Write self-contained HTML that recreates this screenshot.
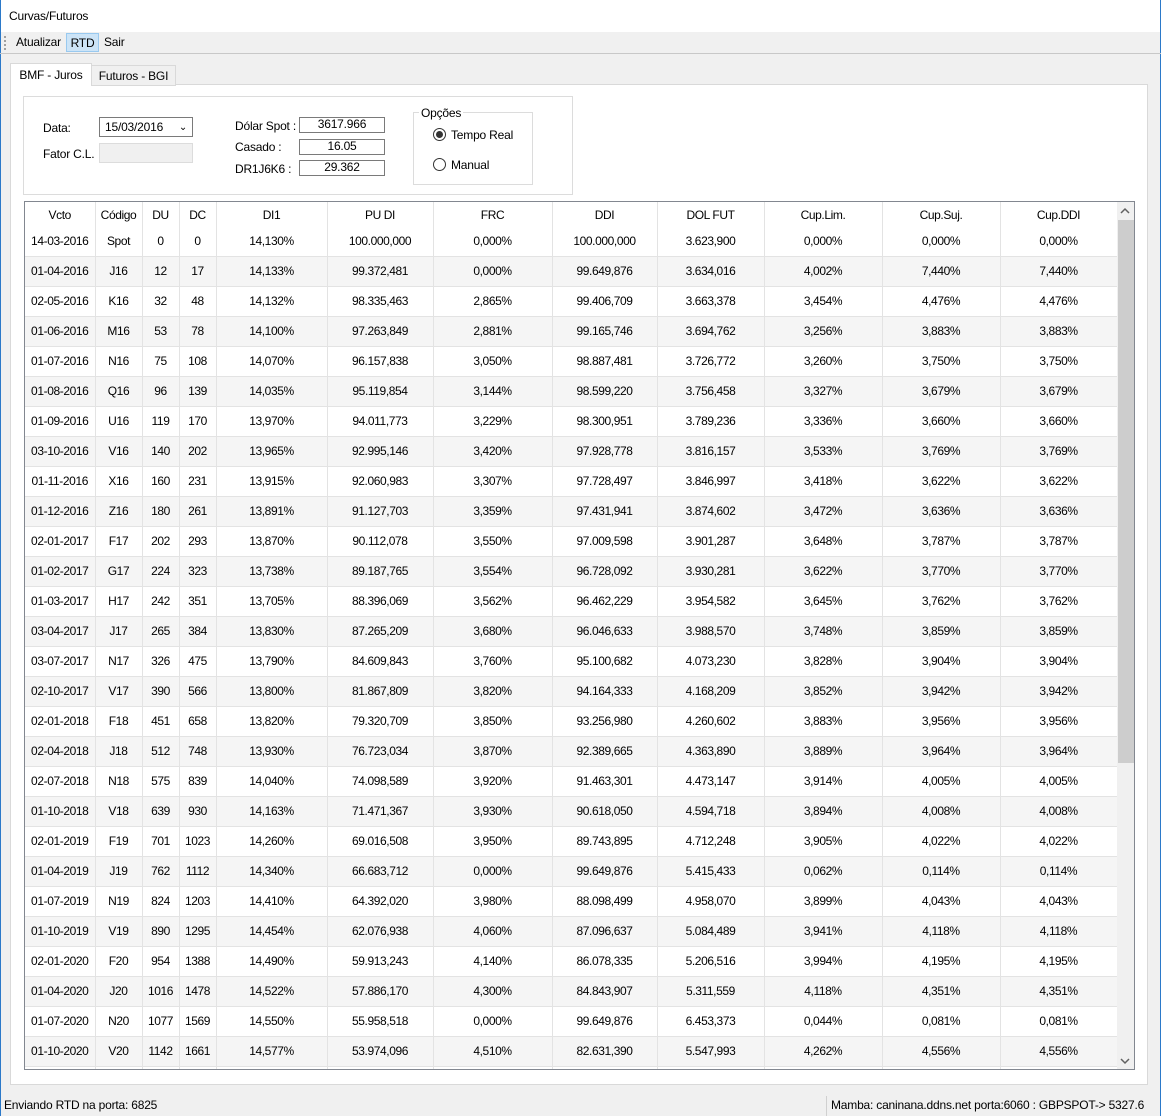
<!DOCTYPE html>
<html><head><meta charset="utf-8">
<style>
*{margin:0;padding:0;box-sizing:border-box}
body{width:1161px;height:1116px;background:#f0f0f0;font-family:"Liberation Sans",sans-serif;font-size:12px;color:#000;position:relative;overflow:hidden;letter-spacing:-0.2px}
.a{position:absolute}
#title{left:0;top:0;width:1161px;height:32px;background:#fff}
#tb{left:0;top:32px;width:1161px;height:22px;border-bottom:1px solid #c8c8c8}
.btn{top:33px;height:19px;line-height:19px;padding:0 4px}
#panel{left:10px;top:84px;width:1138px;height:1001px;background:#fff;border:1px solid #d9d9d9}
.tab{height:21px;line-height:20px;text-align:center;border:1px solid #d9d9d9;border-bottom:none}
.box{background:#fff;border:1px solid #7a7a7a;height:15px;text-align:center;line-height:13px}
#grid{left:24px;top:201px;width:1111px;height:869px;border:1px solid #828790;background:#fff;overflow:hidden}
table{border-collapse:collapse;table-layout:fixed;width:1092px;font-size:12px}
td,th{text-align:center;border-right:1px solid #e3e3e3;border-bottom:1px solid #e3e3e3;height:30px;font-weight:normal;white-space:nowrap;overflow:hidden;letter-spacing:-0.4px}
th{height:24px;border-bottom:none;padding-top:1px}
tr:nth-child(odd) td{background:#f5f5f5}
tr.h0 td{background:#fff}
#sb{left:1117px;top:202px;width:17px;height:867px;background:#f0f0f0}
</style></head><body>
<div class="a" id="title"></div>
<div class="a" style="left:0;top:0;width:1px;height:1116px;background:#2b79c9"></div>
<div class="a" style="left:1160px;top:0;width:1px;height:1116px;background:#2b79c9"></div>
<div class="a" style="left:9px;top:9px;font-size:12px">Curvas/Futuros</div>
<div class="a" id="tb"></div>
<div class="a" style="left:4px;top:36px;width:2px;height:14px;border-left:2px dotted #a0a0a0"></div>
<div class="a btn" style="left:12px">Atualizar</div>
<div class="a btn" style="left:66px;width:33px;background:#cce4f7;border:1px solid #99c9ef;text-align:center;padding:0">RTD</div>
<div class="a btn" style="left:100px">Sair</div>

<div class="a" id="panel"></div>
<div class="a tab" style="left:10px;top:63px;width:82px;height:22px;background:#fff;line-height:22px">BMF - Juros</div>
<div class="a tab" style="left:91px;top:65px;width:85px;background:#f0f0f0;border-bottom:1px solid #d9d9d9">Futuros - BGI</div>

<div class="a" style="left:23px;top:96px;width:550px;height:99px;border:1px solid #dcdcdc"></div>
<div class="a" style="left:43px;top:121px">Data:</div>
<div class="a box" style="left:99px;top:117px;width:94px;height:20px;text-align:left;padding-left:5px;line-height:19px">15/03/2016<span style="position:absolute;right:5px;top:0;font-size:10px">&#8964;</span></div>
<div class="a" style="left:43px;top:147px">Fator C.L.</div>
<div class="a" style="left:99px;top:143px;width:94px;height:20px;background:#f0f0f0;border:1px solid #dcdcdc"></div>
<div class="a" style="left:235px;top:119px">Dólar Spot :</div>
<div class="a" style="left:235px;top:140px">Casado :</div>
<div class="a" style="left:235px;top:162px">DR1J6K6 :</div>
<div class="a box" style="left:299px;top:117px;width:86px;height:16px">3617.966</div>
<div class="a box" style="left:299px;top:139px;width:86px;height:16px">16.05</div>
<div class="a box" style="left:299px;top:160px;width:86px;height:16px">29.362</div>
<div class="a" style="left:413px;top:112px;width:120px;height:73px;border:1px solid #dcdcdc"></div>
<div class="a" style="left:419px;top:106px;background:#fff;padding:0 2px">Opções</div>
<div class="a" style="left:433px;top:128px;width:13px;height:13px;border:1px solid #333;border-radius:50%;background:#fff"><div style="margin:2px;width:7px;height:7px;border-radius:50%;background:#333"></div></div>
<div class="a" style="left:451px;top:128px">Tempo Real</div>
<div class="a" style="left:433px;top:158px;width:13px;height:13px;border:1px solid #333;border-radius:50%;background:#fff"></div>
<div class="a" style="left:451px;top:158px">Manual</div>

<div class="a" id="grid">
<table>
<colgroup><col style="width:70px"><col style="width:47px"><col style="width:37px"><col style="width:37px"><col style="width:111px"><col style="width:106px"><col style="width:119px"><col style="width:105px"><col style="width:107px"><col style="width:118px"><col style="width:118px"><col style="width:117px"></colgroup>
<tr><th>Vcto</th><th>Código</th><th>DU</th><th>DC</th><th>DI1</th><th>PU DI</th><th>FRC</th><th>DDI</th><th>DOL FUT</th><th>Cup.Lim.</th><th>Cup.Suj.</th><th>Cup.DDI</th></tr>
<tr class="h0"><td>14-03-2016</td><td>Spot</td><td>0</td><td>0</td><td>14,130%</td><td>100.000,000</td><td>0,000%</td><td>100.000,000</td><td>3.623,900</td><td>0,000%</td><td>0,000%</td><td>0,000%</td></tr>
<tr><td>01-04-2016</td><td>J16</td><td>12</td><td>17</td><td>14,133%</td><td>99.372,481</td><td>0,000%</td><td>99.649,876</td><td>3.634,016</td><td>4,002%</td><td>7,440%</td><td>7,440%</td></tr>
<tr><td>02-05-2016</td><td>K16</td><td>32</td><td>48</td><td>14,132%</td><td>98.335,463</td><td>2,865%</td><td>99.406,709</td><td>3.663,378</td><td>3,454%</td><td>4,476%</td><td>4,476%</td></tr>
<tr><td>01-06-2016</td><td>M16</td><td>53</td><td>78</td><td>14,100%</td><td>97.263,849</td><td>2,881%</td><td>99.165,746</td><td>3.694,762</td><td>3,256%</td><td>3,883%</td><td>3,883%</td></tr>
<tr><td>01-07-2016</td><td>N16</td><td>75</td><td>108</td><td>14,070%</td><td>96.157,838</td><td>3,050%</td><td>98.887,481</td><td>3.726,772</td><td>3,260%</td><td>3,750%</td><td>3,750%</td></tr>
<tr><td>01-08-2016</td><td>Q16</td><td>96</td><td>139</td><td>14,035%</td><td>95.119,854</td><td>3,144%</td><td>98.599,220</td><td>3.756,458</td><td>3,327%</td><td>3,679%</td><td>3,679%</td></tr>
<tr><td>01-09-2016</td><td>U16</td><td>119</td><td>170</td><td>13,970%</td><td>94.011,773</td><td>3,229%</td><td>98.300,951</td><td>3.789,236</td><td>3,336%</td><td>3,660%</td><td>3,660%</td></tr>
<tr><td>03-10-2016</td><td>V16</td><td>140</td><td>202</td><td>13,965%</td><td>92.995,146</td><td>3,420%</td><td>97.928,778</td><td>3.816,157</td><td>3,533%</td><td>3,769%</td><td>3,769%</td></tr>
<tr><td>01-11-2016</td><td>X16</td><td>160</td><td>231</td><td>13,915%</td><td>92.060,983</td><td>3,307%</td><td>97.728,497</td><td>3.846,997</td><td>3,418%</td><td>3,622%</td><td>3,622%</td></tr>
<tr><td>01-12-2016</td><td>Z16</td><td>180</td><td>261</td><td>13,891%</td><td>91.127,703</td><td>3,359%</td><td>97.431,941</td><td>3.874,602</td><td>3,472%</td><td>3,636%</td><td>3,636%</td></tr>
<tr><td>02-01-2017</td><td>F17</td><td>202</td><td>293</td><td>13,870%</td><td>90.112,078</td><td>3,550%</td><td>97.009,598</td><td>3.901,287</td><td>3,648%</td><td>3,787%</td><td>3,787%</td></tr>
<tr><td>01-02-2017</td><td>G17</td><td>224</td><td>323</td><td>13,738%</td><td>89.187,765</td><td>3,554%</td><td>96.728,092</td><td>3.930,281</td><td>3,622%</td><td>3,770%</td><td>3,770%</td></tr>
<tr><td>01-03-2017</td><td>H17</td><td>242</td><td>351</td><td>13,705%</td><td>88.396,069</td><td>3,562%</td><td>96.462,229</td><td>3.954,582</td><td>3,645%</td><td>3,762%</td><td>3,762%</td></tr>
<tr><td>03-04-2017</td><td>J17</td><td>265</td><td>384</td><td>13,830%</td><td>87.265,209</td><td>3,680%</td><td>96.046,633</td><td>3.988,570</td><td>3,748%</td><td>3,859%</td><td>3,859%</td></tr>
<tr><td>03-07-2017</td><td>N17</td><td>326</td><td>475</td><td>13,790%</td><td>84.609,843</td><td>3,760%</td><td>95.100,682</td><td>4.073,230</td><td>3,828%</td><td>3,904%</td><td>3,904%</td></tr>
<tr><td>02-10-2017</td><td>V17</td><td>390</td><td>566</td><td>13,800%</td><td>81.867,809</td><td>3,820%</td><td>94.164,333</td><td>4.168,209</td><td>3,852%</td><td>3,942%</td><td>3,942%</td></tr>
<tr><td>02-01-2018</td><td>F18</td><td>451</td><td>658</td><td>13,820%</td><td>79.320,709</td><td>3,850%</td><td>93.256,980</td><td>4.260,602</td><td>3,883%</td><td>3,956%</td><td>3,956%</td></tr>
<tr><td>02-04-2018</td><td>J18</td><td>512</td><td>748</td><td>13,930%</td><td>76.723,034</td><td>3,870%</td><td>92.389,665</td><td>4.363,890</td><td>3,889%</td><td>3,964%</td><td>3,964%</td></tr>
<tr><td>02-07-2018</td><td>N18</td><td>575</td><td>839</td><td>14,040%</td><td>74.098,589</td><td>3,920%</td><td>91.463,301</td><td>4.473,147</td><td>3,914%</td><td>4,005%</td><td>4,005%</td></tr>
<tr><td>01-10-2018</td><td>V18</td><td>639</td><td>930</td><td>14,163%</td><td>71.471,367</td><td>3,930%</td><td>90.618,050</td><td>4.594,718</td><td>3,894%</td><td>4,008%</td><td>4,008%</td></tr>
<tr><td>02-01-2019</td><td>F19</td><td>701</td><td>1023</td><td>14,260%</td><td>69.016,508</td><td>3,950%</td><td>89.743,895</td><td>4.712,248</td><td>3,905%</td><td>4,022%</td><td>4,022%</td></tr>
<tr><td>01-04-2019</td><td>J19</td><td>762</td><td>1112</td><td>14,340%</td><td>66.683,712</td><td>0,000%</td><td>99.649,876</td><td>5.415,433</td><td>0,062%</td><td>0,114%</td><td>0,114%</td></tr>
<tr><td>01-07-2019</td><td>N19</td><td>824</td><td>1203</td><td>14,410%</td><td>64.392,020</td><td>3,980%</td><td>88.098,499</td><td>4.958,070</td><td>3,899%</td><td>4,043%</td><td>4,043%</td></tr>
<tr><td>01-10-2019</td><td>V19</td><td>890</td><td>1295</td><td>14,454%</td><td>62.076,938</td><td>4,060%</td><td>87.096,637</td><td>5.084,489</td><td>3,941%</td><td>4,118%</td><td>4,118%</td></tr>
<tr><td>02-01-2020</td><td>F20</td><td>954</td><td>1388</td><td>14,490%</td><td>59.913,243</td><td>4,140%</td><td>86.078,335</td><td>5.206,516</td><td>3,994%</td><td>4,195%</td><td>4,195%</td></tr>
<tr><td>01-04-2020</td><td>J20</td><td>1016</td><td>1478</td><td>14,522%</td><td>57.886,170</td><td>4,300%</td><td>84.843,907</td><td>5.311,559</td><td>4,118%</td><td>4,351%</td><td>4,351%</td></tr>
<tr><td>01-07-2020</td><td>N20</td><td>1077</td><td>1569</td><td>14,550%</td><td>55.958,518</td><td>0,000%</td><td>99.649,876</td><td>6.453,373</td><td>0,044%</td><td>0,081%</td><td>0,081%</td></tr>
<tr><td>01-10-2020</td><td>V20</td><td>1142</td><td>1661</td><td>14,577%</td><td>53.974,096</td><td>4,510%</td><td>82.631,390</td><td>5.547,993</td><td>4,262%</td><td>4,556%</td><td>4,556%</td></tr>
<tr><td></td><td></td><td></td><td></td><td></td><td></td><td></td><td></td><td></td><td></td><td></td><td></td></tr>
</table>
</div>
<div class="a" id="sb"></div>
<div class="a" style="left:1118px;top:220px;width:16px;height:543px;background:#cdcdcd"></div>
<svg class="a" style="left:1120px;top:207px" width="10" height="8"><path d="M1 6 L5 2 L9 6" fill="none" stroke="#606060" stroke-width="1.5"/></svg>
<svg class="a" style="left:1120px;top:1057px" width="10" height="8"><path d="M1 2 L5 6 L9 2" fill="none" stroke="#606060" stroke-width="1.5"/></svg>

<div class="a" style="left:4px;top:1098px">Enviando RTD na porta: 6825</div>
<div class="a" style="left:826px;top:1096px;height:20px;border-left:1px solid #d0d0d0"></div>
<div class="a" style="left:831px;top:1098px">Mamba: caninana.ddns.net porta:6060 : GBPSPOT-&gt; 5327.6</div>
</body></html>
